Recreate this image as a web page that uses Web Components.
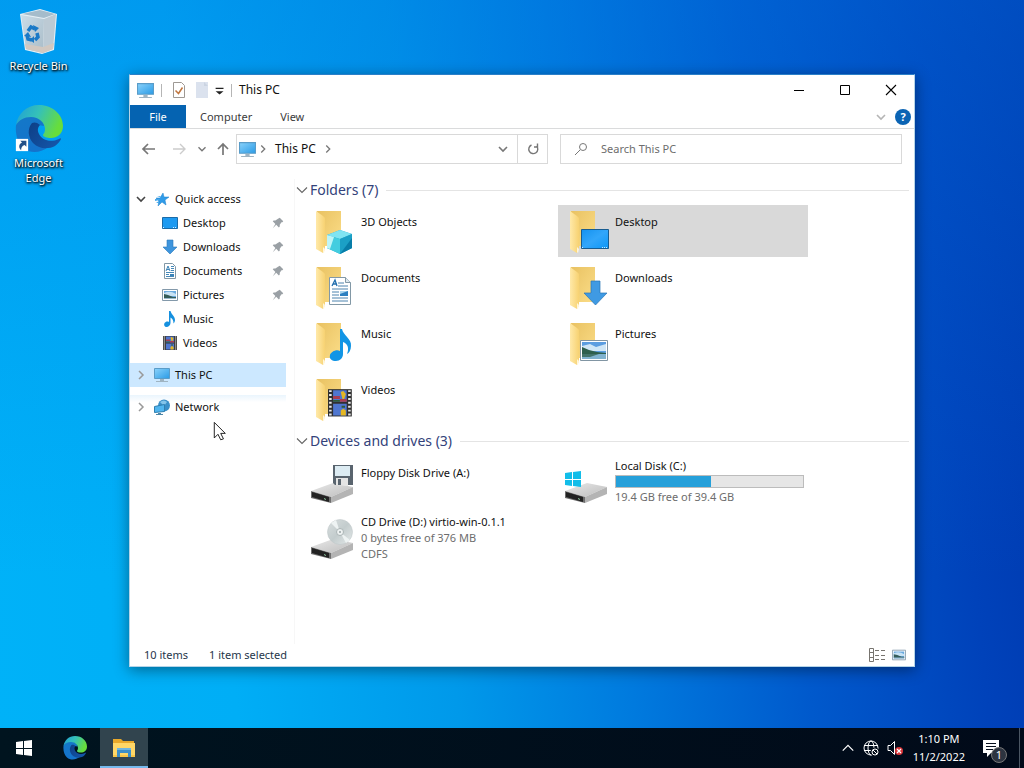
<!DOCTYPE html>
<html lang="en">
<head>
<meta charset="utf-8">
<title>This PC</title>
<style>
html, body { margin: 0; height: 100%; }
body { font: 11px/16px "Noto Sans", "Open Sans", sans-serif; color: #111; }
</style>
</head>
<body>
<desktop-screen>
  <desktop-shortcut slot="icons" icon="bin" label="Recycle Bin"></desktop-shortcut>
  <desktop-shortcut slot="icons" icon="edge" label="Microsoft Edge" linked></desktop-shortcut>
  <explorer-window slot="window"></explorer-window>
  <task-bar slot="bar"></task-bar>
</desktop-screen>

<script>
const edge = `<defs>
  <linearGradient id="a" x1="0" y1="0" x2="1" y2=".35"><stop offset="0" stop-color="#1e9ed8"/><stop offset=".5" stop-color="#35c1b8"/><stop offset="1" stop-color="#67dd3c"/></linearGradient>
  <linearGradient id="b" x1="0" y1="0" x2=".3" y2="1"><stop offset="0" stop-color="#1478c8"/><stop offset="1" stop-color="#1473cc"/></linearGradient>
  <linearGradient id="c" x1="0" y1="0" x2="1" y2=".6"><stop offset="0" stop-color="#0d3f86"/><stop offset="1" stop-color="#1455a8"/></linearGradient></defs>
  <path fill="url(#b)" d="M1 20C4 12 12 10 18 11c7 1 11 5 11 10l-6-1c-6 3-6 9-2 14 3 4 7 6 12 8-7 6-18 7-25 1C3 38 0 30 1 20z"/>
  <path fill="url(#c)" d="M17 18c-5 6-4 14 1 20 7 7 16 6 22 3 3-2 5-5 6-7 0-1-1-1-2 0-9 4-17 1-20-5-2-4-1-7 1-9-3-3-6-3-8-2z"/>
  <path fill="url(#a)" d="M1 20C3 8 12 0 24 0c14 0 24 10 24 21 0 8-6 12-12 12-4 0-8-1-8-3 0-1 2-2 2-6 0-6-6-12-14-12-7 0-12 3-15 8z"/>`;
const folder = `<defs>
  <linearGradient id="f" x1="0" x2="1" y2="1"><stop offset="0" stop-color="#e9c262"/><stop offset="1" stop-color="#fbdd88"/></linearGradient>
  <linearGradient id="g" x1="0" x2="1"><stop offset="0" stop-color="#ffe9a9"/><stop offset="1" stop-color="#f7d272"/></linearGradient></defs>
  <path fill="url(#f)" d="M8 4h24v35H12z"/><path fill="url(#g)" d="M7 4l7 5 2 2v31l-2 4-7-4z"/><path fill="#fff6dc" d="M14 40l2 2-1 4-1-1z"/>`;
const drive = `<defs><linearGradient id="d" x1="0" x2="1" y2="1"><stop offset="0" stop-color="#e9e9e9"/><stop offset="1" stop-color="#bcbcbc"/></linearGradient></defs>
  <path fill="url(#d)" d="M2 33l22-8 20 4-22 10z"/><path fill="#b4b4b4" d="M22 39l22-10v7l-22 9z"/><path fill="#6d6d6d" d="M2 33l20 6v6L2 40z"/><path fill="#222" d="M3 34l17 5v5L3 39z"/><path fill="#8fc7a0" d="M15 40l2 1v1l-2-1z"/>`;
const monitor = `<defs><linearGradient id="m" x2="1" y2="1"><stop stop-color="#8ad2fb"/><stop offset="1" stop-color="#2a9be6"/></linearGradient></defs>
  <path fill="url(#m)" stroke="#5a9cc8" d="M.5 1.5h15v10H.5z"/><path fill="#9fb4c2" d="M6 12h4v2H6zM2 14h12v1H2z"/>`;
const film = `<path fill="#303030" d="M1 1h14v14H1z"/><path stroke="#e8e8e8" stroke-width="1.5" stroke-dasharray="1 1" d="M2.400 1.500v13M13.600 1.500v13"/>
  <path fill="#4f76cf" d="M4 1.500h8v6H4zM4 8.500h8v6H4z"/><path fill="#a93d52" d="M4 4.500h4v1.500H4zM8 6h4v1.500H8z"/><path fill="#e5b722" d="M8.500 2.500l1.500-.5 1.500 1.500-1 2.500h-1zM8.500 12l1.500-1 1.500 1 0 2.500h-3z"/><path fill="#315b36" d="M4 6.500h4v1H4zM9 9.500h2v1H9z"/>`;
const photo = `<path fill="#fff" stroke="#8399aa" d="M.5 2.5h15v11H.5z"/><path fill="#68a9df" d="M2 4h12v8H2z"/><path fill="#c7e2f5" d="M2 6q6-3 12 1v2H2z"/><path fill="#355d59" d="M2 7l4 1 5 2 3 0v1H2z"/><path fill="#9ab9cd" d="M2 11h12v1H2z"/>`;
const note = `<path fill="#1590df" d="M7 0h1.500c1 4 4.500 5 4.500 9 0 2-1 3-1.500 3.500 0-3-1-5-3-6V12c0 2-2 4-4 4s-3-2-2-4c1-1 2.500-2 4.500-1z"/>`;
const arrow = `<path fill="#3e95dd" stroke="#2c79ba" stroke-width=".6" d="M5 1h6v7h4l-7 7-7-7h4z"/>`;
const win = `<path fill="currentColor" d="M0 2l7-1v7H0zM8 1l8-1v8H8zM0 9h7v6l-7-1zM8 9h8v7l-8-1z"/>`;
const line = (d, c = 'currentColor', w = 1) => `<path fill="none" stroke="${c}" stroke-width="${w}" d="${d}"/>`;

const ICONS = {
  edge: [48, edge],
  bin: [48, `<defs><linearGradient id="r" x2="1" y2="1"><stop stop-color="#cbdde8"/><stop offset="1" stop-color="#a9bcc8"/></linearGradient></defs>
    <path fill="#e6f0f6" d="M5 6l20-5 17 5-3 36-12 4-17-4z"/><path fill="#a5bccb" d="M7 6l18-4 15 4-11 4z"/><path fill="url(#r)" d="M6 7l23 4-1 34-17-4z"/><path fill="#bccad4" d="M29 11l12-5-3 35-10 4z"/><path fill="#d2c8c0" d="M10 36l18 3v6l-17-4zM28 39l11-4-1 6-10 4z"/>
    <g fill="none" stroke="#1979c7" stroke-width="3.500"><path d="M13 23l3-4 4 2"/><path d="M22 25l1 4-3 3"/><path d="M17 32l-4-1-1-4"/></g><path fill="#1979c7" d="M18 17l6 3-4 4zM19 28v7l-4-3zM9 28l4-4 3 5z"/>`],
  objects: [48, folder + `<path fill="#28a8cb" d="M18 28l13-5 12 4v14l-12 6-13-6z"/><path fill="#80e4f2" d="M18 28l13-5 12 4-12 5z"/><path fill="#43cde0" d="M18 28l13 4v15l-13-6z"/><path fill="#bff5f7" d="M18 28l7 2-4 12-3-1z"/><path fill="#1ba0c6" d="M31 32l12-5v14l-12 6z"/><path fill="#087da8" d="M31 47l12-16v10z"/>`],
  documents: [48, folder + `<path fill="#fff" stroke="#8298a6" d="M20.500 14.500h16l5 5v22h-21z"/><path fill="#dce7ee" stroke="#8298a6" d="M36.500 14.500v5h5"/>` + line('M23 23l3-6 2 6M24 21h4', '#236fae', 1.3) + line('M29 20h6M29 23h10M23 26h16M23 29h7M23 32h7M23 35h16M23 38h16', '#4c83ae') + `<path fill="#2c7fc0" d="M31 28h8v5h-8z"/><path fill="#a8d4ee" d="M31 28h8l-8 3z"/>`],
  music: [48, folder + `<path fill="#1295e5" d="M31 10h2c1 6 10 10 9 17 0 4-2 7-4 8 3-8-1-11-4-12v12c0 4-3 7-7 7s-7-2-6-6c1-3 6-6 10-4z"/>`],
  videos: [48, folder + `<g transform="translate(17.300 12.200) scale(1.700 1.950)">${film}</g>`],
  desktop: [48, folder + `<defs><linearGradient id="k" x2="1" y2="1"><stop stop-color="#1492ef"/><stop offset=".5" stop-color="#32a6fa"/><stop offset="1" stop-color="#0c97f7"/></linearGradient></defs><path fill="url(#k)" stroke="#185c90" d="M18.500 22.500h27v19h-27z"/><path fill="#c8ecff" d="M19 40h1v1h-1zM39 40h1v1h-1zM41 40h1v1h-1zM43 40h1v1h-1z"/>`],
  downloads: [48, folder + `<path fill="#3f9ae3" stroke="#2a75b5" stroke-width=".7" d="M28 18h9v12h7L32.500 42 21 30h7z"/>`],
  pictures: [48, folder + `<path fill="#fff" stroke="#8195a3" d="M17.500 21.500h27v20h-27z"/><path fill="#5b9de0" d="M19 23h24v17H19z"/><path fill="#cfe6f6" d="M19 27l8-2 6 3 10-3v7H19z"/><path fill="#2d5f4d" d="M19 28l7 3 8 2 9 1v1H19z"/><path fill="#7fb2cf" d="M19 35h24v5H19z"/><path fill="#42736a" d="M19 35h17l-9 3h-8z"/>`],
  floppy: [48, drive + `<path fill="#59646e" d="M24 7h20v20H26l-2-2z"/><path fill="#dcebf2" d="M26 8h15v10H26z"/><path fill="#e4e4e4" d="M27 20h12v8l-12-1z"/><path fill="#59646e" d="M29 21h3v6h-3z"/>`],
  cd: [48, `<defs><linearGradient id="l" x2="1" y2="1"><stop stop-color="#d9dfdf"/><stop offset=".5" stop-color="#c3cccd"/><stop offset="1" stop-color="#e5eaea"/></linearGradient></defs>` + drive + `<circle cx="31" cy="18" r="12.500" fill="url(#l)" stroke="#bcc5c6" stroke-width=".5"/><path fill="#eef3f3" d="M31 18L22 9l5-3zM31 18l10 8-4 3z"/><circle cx="31" cy="18" r="3.500" fill="#eef2f2" stroke="#aab4b5"/><circle cx="31" cy="18" r="1" fill="#98a3a5"/>`],
  disk: [48, drive + `<g transform="translate(2 13)" color="#12bde9">${win}</g>`],
  pc: [16, monitor], film: [16, film], photo: [16, photo], note: [16, note], arrow: [16, arrow], win: [16, win],
  screen: [16, `<path fill="#1d9af1" stroke="#1b6ba8" d="M.5 2.500h15v11H.5z"/><path fill="#d4efff" d="M1 12h1v1H1zM11 12h1v1h-1zM13 12h1v1h-1z"/>`],
  page: [16, `<path fill="#fff" stroke="#8298a6" d="M2.500.5h8l3 3v12h-11z"/>` + line('M9 3.500h3M4 9.500h8M4 11.500h3M4 13.500h8M5 6.500h2M9 5.500h3M9 7.500h3', '#4488b8') + line('M4 8l2-5 2 5', '#3a83b8') + `<path fill="#3a83b8" d="M8 11h4v2H8z"/>`],
  star: [16, `<path fill="#2f9be8" stroke="#1c80cd" stroke-width=".5" d="M9 2l1 4 5 0-4 3 1 5-4-3-4 4 1-5-3-3 4 0z"/><path fill="#4aa9ea" d="M1 8l4 0 1 1-5 1zM2 12l3-2 0 2zM3 5l4 0-1 1z"/>`],
  network: [16, `<circle cx="10" cy="6.500" r="6" fill="#3a8fc8"/><path fill="#83c4ea" d="M6 3q4-3 7 0l-3 4z"/><path fill="#50b5ef" stroke="#2f7fb0" d="M.5 7.500l10-2v7l-10 1z"/><path fill="#4d86a8" d="M4 14h3v1H4zM2 15h7v1H2z"/>`],
  pin: [16, `<path fill="#9aa0a5" d="M10 2l4 4-1 1-1 0-2 3 0 2-1 1-3-3-4 4 3-5-3-3 1-1h2l3-2V3z"/>`],
  down: [16, line('M4 6l4 4 4-4', 'currentColor', 1.600)],
  wide: [16, line('M3 5.500l5 5 5-5', 'currentColor', 1.100)],
  right: [16, line('M6 4l4 4-4 4', 'currentColor', 1.500)],
  up: [16, line('M2 11l6-6 6 6', 'currentColor', 1.4)],
  back: [16, line('M2 8h12M7 3L2 8l5 5', 'currentColor', 1.7)],
  forward: [16, line('M2 8h12M9 3l5 5-5 5', 'currentColor', 1.4)],
  parent: [16, line('M8 14V3M3 8l5-5 5 5', 'currentColor', 1.7)],
  refresh: [16, line('M11.500 5a4.500 4.500 0 1 1-5-1M12.500 2.500V6H9', 'currentColor', 1.400)],
  lens: [16, line('M2 14l5-5', 'currentColor') + `<circle cx="10" cy="6" r="3.500" fill="none" stroke="currentColor"/>`],
  check: [16, `<path fill="#fff" stroke="#9e9994" d="M2.500.5h8l3 3v12h-11z"/>` + line('M4.500 8.500l3 3 4-6', '#c1763f', 1.500)],
  blank: [16, `<path fill="#dbe2ee" d="M2 0h12v16H2z"/><path fill="#cbd4e2" d="M10 0l4 4h-4z"/>`],
  custom: [16, `<path fill="#222" d="M5 6h7v1H5zM5 9h7l-3.500 3z"/>`],
  min: [16, line('M3 8.500h10')], max: [16, line('M3.500 3.500h9v9h-9z')], close: [16, line('M3 3l10 10M13 3L3 13', 'currentColor', 1.100)],
  list: [16, line('M.5 1.500h4v13h-4zM1 5.500h3M1 10.500h3M6 3.500h4M6 8.500h4M6 12.500h4M12 3.500h4M12 8.500h4M12 12.500h4', '#77746f')],
  files: [24, `<path fill="#e9a92b" d="M1 3h8l2 2h11v4H1z"/><path fill="#ffd767" d="M1 7h22v14H1z"/><path fill="#f9c648" d="M1 19h22v2H1z"/><path fill="#3c8ec8" d="M5 13h14v8h-3v-4H8v4H5z"/><path fill="#70b5df" d="M5 12h14v2H5z"/>`],
  globe: [16, `<g fill="none" stroke="#fff"><circle cx="8" cy="8" r="7"/><ellipse cx="8" cy="8" rx="3" ry="7"/><path d="M1 5.500h14M1 10.500h9"/></g><circle cx="12" cy="12" r="4.500" fill="#020c18"/><circle cx="12" cy="12" r="3" fill="none" stroke="#fff"/>` + line('M10 10l4 4', '#fff')],
  mute: [16, line('M1 5.500h2.500l4-4v13l-4-4H1z', '#fff') + `<circle cx="12" cy="11" r="4" fill="#d9363a"/>` + line('M10 9l4 4M14 9l-4 4', '#fff', 1.200)],
  message: [24, `<path fill="#fff" d="M2 4h16v13h-8l-4 4v-4H2z"/>` + line('M5 7.500h10M5 10.500h10M5 13.500h7', '#07101e')],
  link: [16, `<path fill="#fff" d="M1 1h14v14H1z"/><path fill="#234f88" d="M6 3h7v7l-2-2c-3 1-4 3-4 6-3-3-3-7 1-9z"/>`],
  pointer: [24, `<path fill="#fff" stroke="#111" stroke-linejoin="round" d="M2.500 1.500v17l4-4 3 6 3-1-3-6h5z"/>`]
};

function define(name, cls) { customElements.define(name, cls); }
class Base extends HTMLElement {
  connectedCallback() { this.attachShadow({ mode: 'open' }).innerHTML = `<style>
    * { box-sizing: border-box; } button { font: inherit; color: inherit; border: 0; padding: 0; background: none; }
    ${this.css()}</style>${this.html()}`; }
  at(n) { return this.getAttribute(n) || ''; }
}
const ico = (n, s = 16) => `<ui-icon name="${n}" size="${s}"></ui-icon>`;

define('ui-icon', class extends Base {
  css() { const s = this.at('size'); return `:host { display: block; flex: none; width: ${s}px; height: ${s}px; } svg { display: block; width: 100%; height: 100%; }`; }
  html() { const [v, body] = ICONS[this.at('name')]; return `<svg viewBox="0 0 ${v} ${v}" aria-hidden="true">${body}</svg>`; }
});

define('desktop-screen', class extends Base {
  css() { return `:host { display: flex; flex-direction: column; min-height: 100vh; background:
      linear-gradient(180deg, rgba(0,116,226,.35), transparent 75%),
      linear-gradient(84deg, #00b2f8 0%, #00aef6 22%, #0099ea 42%, #007ade 58%, #0059cc 74%, #0042ba 90%, #0038ae 100%); }
    main { flex: 1; position: relative; display: flex; flex-direction: column; }
    .icons { display: flex; flex-direction: column; align-items: flex-start; gap: 32px; padding: 8px 0 0; }
    .window { position: absolute; inset: 74px 109px 61px 129px; display: flex; }
    .window ::slotted(*) { flex: 1; }
    .pointer { position: absolute; left: 212px; top: 421px; }`; }
  html() { return `<main><div class="icons"><slot name="icons"></slot></div><div class="window"><slot name="window"></slot></div><div class="pointer">${ico('pointer', 22)}</div></main><slot name="bar"></slot>`; }
});

define('desktop-shortcut', class extends Base {
  css() { return `:host { display: block; width: 77px; } button { display: flex; flex-direction: column; align-items: center; gap: 2px; width: 100%; color: #fff; font-size: 11px; line-height: 15px; text-shadow: 1px 1px 2px #000, 0 1px 3px #000; }
    .pic { position: relative; } .badge { position: absolute; left: 0; bottom: 1px; } span { max-width: 64px; }`; }
  html() { return `<button><div class="pic">${ico(this.at('icon'), 48)}${this.hasAttribute('linked') ? `<div class="badge">${ico('link', 14)}</div>` : ''}</div><span>${this.at('label')}</span></button>`; }
});

define('explorer-window', class extends Base {
  css() { return `:host { display: flex; flex-direction: column; background: #fff; border: 1px solid #b5d4e8; border-top-color: #2b7fc8; box-shadow: 0 3px 14px rgba(0,0,0,.42); }
    .body { flex: 1; display: flex; padding-top: 10px; min-height: 0; } nav-pane { flex: none; } file-pane { flex: 1; min-width: 0; }
    footer { display: flex; align-items: center; gap: 21px; height: 22px; padding: 0 8px 0 14px; color: #26364a; }
    .views { margin-left: auto; display: flex; gap: 7px; }`; }
  html() { return `<title-bar></title-bar><ribbon-tabs></ribbon-tabs><address-row></address-row>
    <div class="body"><nav-pane></nav-pane><file-pane></file-pane></div>
    <footer><span>10 items</span><span>1 item selected</span><div class="views"><button aria-label="Details">${ico('list')}</button><button aria-label="Large icons">${ico('photo', 14)}</button></div></footer>`; }
});

define('title-bar', class extends Base {
  css() { return `:host { display: flex; align-items: center; height: 30px; padding-left: 7px; }
    i { width: 1px; height: 13px; background: #b5b5b5; } .a { margin: 0 9px 0 7px; }  .b { margin: 0 7px 0 3px; }
    .gap { margin-right: 7px; } .t { font-size: 12px; flex: 1; } .w { width: 46px; height: 30px; display: grid; place-items: center; color: #000; }`; }
  html() { return `${ico('pc', 17)}<i class="a"></i><button class="gap" aria-label="Properties">${ico('check')}</button><button aria-label="New folder">${ico('blank')}</button><button aria-label="Customize">${ico('custom', 18)}</button><i class="b"></i><span class="t">This PC</span>
    <button class="w" aria-label="Minimize">${ico('min')}</button><button class="w" aria-label="Maximize">${ico('max')}</button><button class="w" aria-label="Close">${ico('close')}</button>`; }
});

define('ribbon-tabs', class extends Base {
  css() { return `:host { display: flex; align-items: stretch; height: 24px; border-bottom: 1px solid #dadbdc; color: #3b3b3b; }
    button { padding: 0 14px; } .file { width: 56px; padding: 0; background: #0563b1; color: #fff; }
    .end { margin-left: auto; display: flex; align-items: center; gap: 6px; padding-right: 3px; color: #b5b5b5; } .end button { padding: 0; }
    .help { width: 16px; height: 16px; border-radius: 50%; background: #0b64b4; color: #fff; font-weight: 700; }`; }
  html() { return `<button class="file">File</button><button>Computer</button><button>View</button><div class="end"><button aria-label="Expand ribbon">${ico('down')}</button><button class="help">?</button></div>`; }
});

define('address-row', class extends Base {
  css() { return `:host { display: flex; align-items: center; height: 40px; padding: 0 12px 0 11px; color: #777; }
    .nav { display: flex; align-items: center; } .nav button + button { margin-left: 14px; } .nav .h { margin-left: 8px !important; } .nav .p { margin-left: 6px !important; } .off { color: #ccc; }
    .box { height: 30px; border: 1px solid #d9d9d9; display: flex; align-items: center; min-width: 0; }
    .path { flex: 1 1 44px; margin: 0 12px 0 5px; padding-left: 2px; } .path .c { color: #111; margin: 0 5px; font-size: 12px; }
    .sp { flex: 1; } .r { align-self: stretch; width: 30px; display: grid; place-items: center; border-left: 1px solid #d9d9d9; } .d { margin-right: 6px; }
    .search { flex: 1 1 74px; padding-left: 12px; gap: 12px; } input { flex: 1; min-width: 0; font: inherit; color: #444; border: 0; padding: 0; outline: 0; } input::placeholder { color: #6d6d6d; opacity: 1; }`; }
  html() { return `<div class="nav"><button aria-label="Back">${ico('back')}</button><button class="off" aria-label="Forward">${ico('forward')}</button><button class="h" aria-label="Recent">${ico('down', 14)}</button><button class="p" aria-label="Up">${ico('parent')}</button></div>
    <div class="box path">${ico('pc', 17)}${ico('right', 14)}<button class="c">This PC</button>${ico('right', 14)}<span class="sp"></span><button class="d" aria-label="Previous locations">${ico('down')}</button><button class="r" aria-label="Refresh">${ico('refresh')}</button></div>
    <label class="box search">${ico('lens')}<input type="text" placeholder="Search This PC" aria-label="Search This PC"></label>`; }
});

define('nav-row', class extends Base {
  css() { return `:host { display: block; } button { display: flex; align-items: center; width: 100%; height: 24px; padding: 0 1px 0 3px; text-align: left; color: #111; }
    :host([child]) button { padding-left: 32px; } :host([selected]) button { background: #cce8ff; }
    :host([warm]) button { background: linear-gradient(#eaf5fd, #fff 30%); }
    .m { width: 16px; margin-right: 5px; color: #999; } :host([open]) .m { color: #444; } span { flex: 1; margin-left: 5px; }`; }
  html() { const c = this.hasAttribute('child'); return `<button>${c ? '' : `<div class="m">${ico(this.hasAttribute('open') ? 'down' : 'right')}</div>`}${ico(this.at('icon'))}<span>${this.at('label')}</span>${this.hasAttribute('pinned') ? ico('pin', 14) : ''}</button>`; }
});

define('nav-pane', class extends Base {
  css() { return `:host { display: flex; flex-direction: column; gap: 8px; width: 165px; padding: 8px 8px 0 0; border-right: 1px solid #f7f7f7; }`; }
  html() { const r = (i, l, a) => `<nav-row icon="${i}" label="${l}" ${a}></nav-row>`;
    return `<div>${r('star', 'Quick access', 'open')}${r('screen', 'Desktop', 'child pinned')}${r('arrow', 'Downloads', 'child pinned')}${r('page', 'Documents', 'child pinned')}${r('photo', 'Pictures', 'child pinned')}${r('note', 'Music', 'child')}${r('film', 'Videos', 'child')}</div>${r('pc', 'This PC', 'selected')}${r('network', 'Network', 'warm')}`; }
});

define('file-group', class extends Base {
  css() { return `:host { display: block; } h2 { display: flex; align-items: center; height: 20px; margin: 0 0 5px; font-size: 14px; line-height: 20px; font-weight: 400; color: #33427a; }
    h2 ui-icon { color: #666; } h2::after { content: ""; flex: 1; height: 1px; background: #e4e4e4; margin-left: 8px; }
    .grid { display: grid; grid-template-columns: repeat(auto-fill, 250px); gap: 4px; padding-left: 10px; }`; }
  html() { return `<h2>${ico('wide')}${this.at('label')}</h2><div class="grid"><slot></slot></div>`; }
});

define('file-tile', class extends Base {
  css() { return `:host { display: flex; gap: 4px; height: 52px; padding: 2px 5px; box-sizing: border-box; } :host([selected]) { background: #d9d9d9; }
    .t { flex: 1; display: flex; flex-direction: column; } :host(:not([full])) .t { padding-top: 7px; } .n { text-align: left; line-height: 16px; color: #111; } small { font-size: 11px; color: #6d6d6d; }
    progress { appearance: none; display: block; width: 189px; height: 13px; margin: 1px 0; border: 1px solid #bcbcbc; background: #e6e6e6; } progress::-webkit-progress-bar { background: #e6e6e6; } progress::-webkit-progress-value { background: #26a0da; }`; }
  html() { const v = this.at('used'); return `${ico(this.at('icon'), 48)}<div class="t"><button class="n">${this.at('label')}</button>${v ? `<progress max="100" value="${v}" aria-label="Used space"></progress>` : ''}${this.at('info').split('|').map(s => s && `<small>${s}</small>`).join('')}</div>`; }
});

define('file-pane', class extends Base {
  css() { return `:host { display: flex; flex-direction: column; gap: 6px; padding: 1px 5px 0 0; margin-left: -1px; }`; }
  html() { const t = (i, l, a = '') => `<file-tile icon="${i}" label="${l}" ${a}></file-tile>`;
    return `<file-group label="Folders (7)">${t('objects', '3D Objects')}${t('desktop', 'Desktop', 'selected')}${t('documents', 'Documents')}${t('downloads', 'Downloads')}${t('music', 'Music')}${t('pictures', 'Pictures')}${t('videos', 'Videos')}</file-group>
    <file-group label="Devices and drives (3)">${t('floppy', 'Floppy Disk Drive (A:)')}${t('disk', 'Local Disk (C:)', 'full used="51" info="19.4 GB free of 39.4 GB"')}${t('cd', 'CD Drive (D:) virtio-win-0.1.1', 'full info="0 bytes free of 376 MB|CDFS"')}</file-group>`; }
});

define('task-bar', class extends Base {
  css() { return `:host { display: flex; height: 40px; background: linear-gradient(90deg, #00141f, #010a19); color: #fff; }
    .app { width: 48px; display: grid; place-items: center; } .edge { width: 52px; padding-left: 2px; } .on { background: #31444e; border-bottom: 2px solid #76b9ed; padding-top: 2px; }
    .tray { margin-left: auto; display: flex; align-items: center; } .tray button { display: block; } .g { margin: 0 8px; } .time { margin: 0 16px 0 10px; text-align: center; line-height: 18px; }
    .msg { position: relative; margin-right: 14px; } .msg b { position: absolute; left: 10px; top: 11px; width: 16px; height: 16px; border: 1px solid #777; border-radius: 50%; background: #2d3440; font-weight: 400; line-height: 14px; text-align: center; }
    .show { align-self: stretch; width: 5px; border-left: 1px solid #4b5663; }`; }
  html() { return `<button class="app" aria-label="Start">${ico('win')}</button><button class="app edge" aria-label="Edge">${ico('edge', 24)}</button><button class="app on" aria-label="File Explorer">${ico('files', 24)}</button>
    <div class="tray"><button aria-label="Hidden icons">${ico('up', 14)}</button><button class="g" aria-label="Network">${ico('globe')}</button><button aria-label="Volume">${ico('mute')}</button><button class="time">1:10 PM<br>11/2/2022</button><button class="msg" aria-label="Notifications">${ico('message', 24)}<b>1</b></button><button class="show" aria-label="Show desktop"></button></div>`; }
});
</script>
</body>
</html>
